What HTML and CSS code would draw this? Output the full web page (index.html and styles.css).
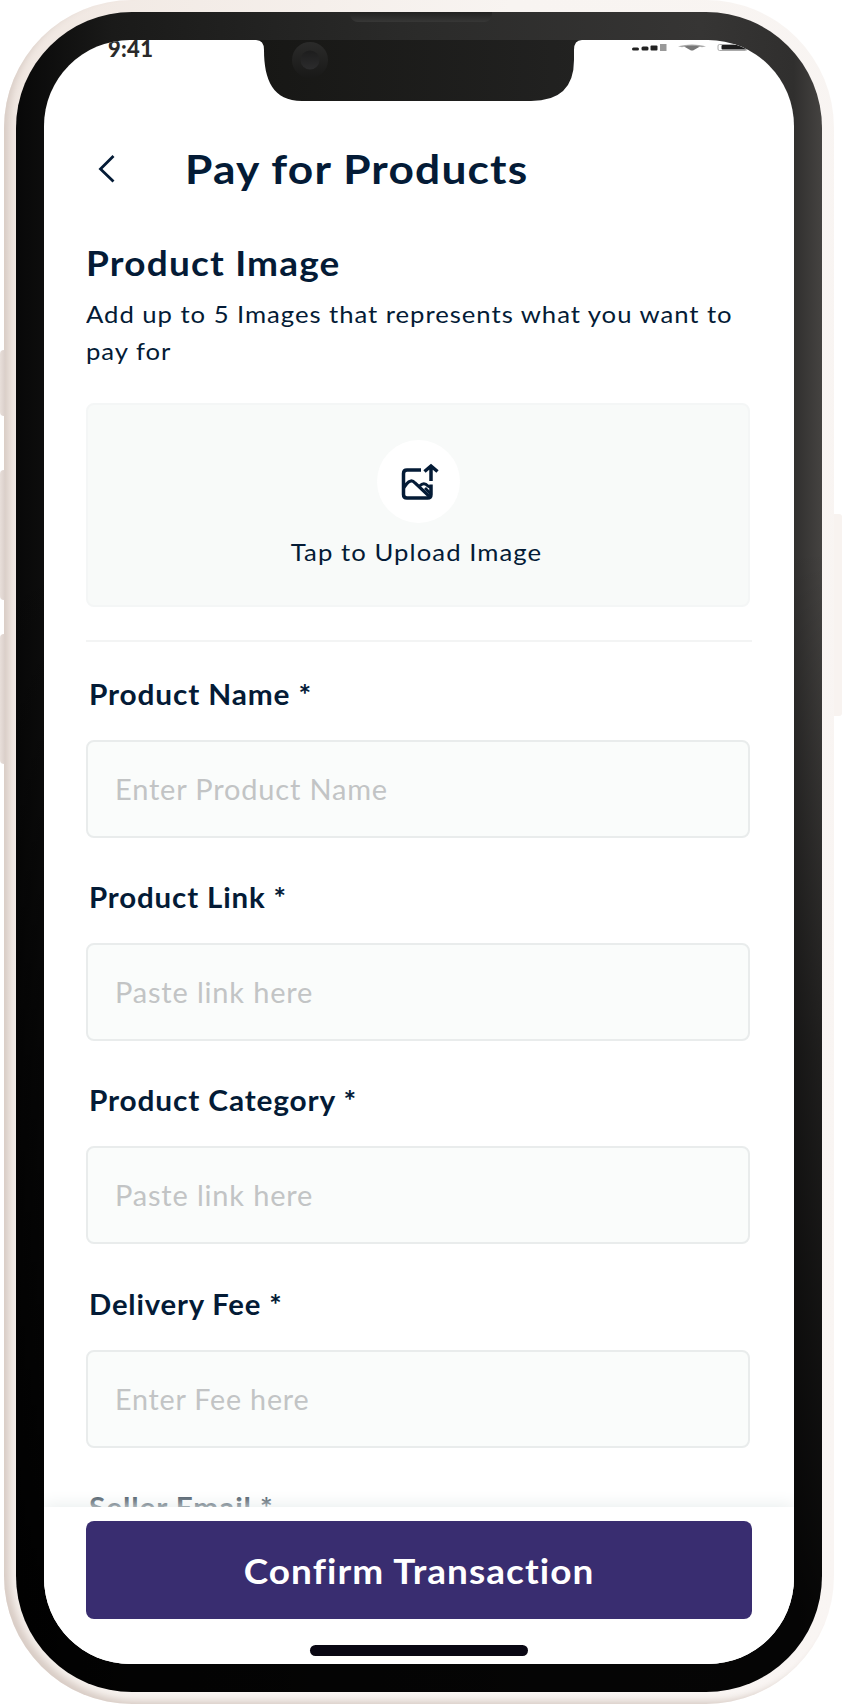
FILE: index.html
```html
<!DOCTYPE html>
<html lang="en">
<head>
<meta charset="utf-8">
<title>Pay for Products</title>
<link rel="stylesheet" href="styles.css">
</head>
<body>
<div class="phone">
  <span class="key key-mute"></span>
  <span class="key key-up"></span>
  <span class="key key-down"></span>
  <span class="key key-power"></span>
  <div class="frame">
    <div class="bezel">
      <span class="speaker"></span>
      <div class="screen">
        <div class="status">
          <span class="clock">9:41</span>
          <svg class="signals" width="116" height="8" viewBox="0 0 116 8">
            <g fill="#222"><rect x="0" y="3.5" width="7" height="3" rx="1.500"/><rect x="9.500" y="2.5" width="7" height="4" rx="1.500"/><rect x="18.500" y="1.500" width="7" height="5" rx="1"/></g>
            <rect x="28" y="0" width="6.500" height="7" fill="#999"/>
            <path d="M46 2.300Q60-1.500 74 2.300L70 3.200Q60 .5 50 3.200Z" fill="#aaa"/>
            <path d="M52 2.500Q60 .5 68 2.500L61 6.500H59Z" fill="#777"/>
            <rect x="86" y=".5" width="29" height="6" rx="1.500" fill="#fff" stroke="#aaa"/>
            <rect x="89.500" y="1" width="25" height="4.500" rx="1" fill="#1c1c1c"/>
          </svg>
        </div>
        <header class="header">
          <svg class="back" width="18" height="30" viewBox="0 0 18 30"><path d="M15.500 1 2.500 14l13 12.500" fill="none" stroke="#041b36" stroke-width="2.800"/></svg>
          <h1 class="title">Pay for Products</h1>
        </header>
        <main class="content">
          <h2 class="section-title">Product Image</h2>
          <p class="hint">Add up to 5 Images that represents what you want to<br>pay for</p>
          <div class="upload">
            <span class="upload-icon">
              <svg class="upload-glyph" width="38" height="38" viewBox="0 0 38 38" fill="none" stroke="#041b36" stroke-width="3.500">
                <path d="M22 7H8Q4.500 7 4.500 10.500V31.500Q4.500 35 8 35H28.500Q32 35 32 31.500V21.500"/>
                <path d="M4.500 25l3-4Q12 15.500 16 20L31 34" stroke-width="3.200"/>
                <path d="M20.500 23Q25 18.500 29 23l3 1.500M26 25l6 6" stroke-width="2.800"/>
                <path d="M32 18V3.500M25.500 8.500l6.500-5.500 6.500 5.500"/>
              </svg>
            </span>
            <span class="upload-text">Tap to Upload Image</span>
          </div>
          <hr class="rule">
          <div class="field"><label class="label">Product Name *</label><div class="input"><span class="placeholder">Enter Product Name</span></div></div>
          <div class="field"><label class="label label-link">Product Link *</label><div class="input"><span class="placeholder">Paste link here</span></div></div>
          <div class="field"><label class="label">Product Category *</label><div class="input"><span class="placeholder">Paste link here</span></div></div>
          <div class="field"><label class="label label-fee">Delivery Fee *</label><div class="input"><span class="placeholder placeholder-fee">Enter Fee here</span></div></div>
          <div class="field"><label class="label label-mail">Seller Email *</label></div>
        </main>
        <footer class="footer">
          <button class="confirm" type="button"><span class="confirm-text">Confirm Transaction</span></button>
          <span class="home"></span>
        </footer>
        <svg class="notch" width="326" height="62" viewBox="0 0 326 62">
          <defs>
            <linearGradient id="n" x1="0" x2="1" y1="0" y2="0"><stop stop-color="#171715"/><stop offset="1" stop-color="#222221"/></linearGradient>
            <linearGradient id="c" x1="0" x2="0" y1="0" y2="1"><stop stop-color="#2b2b2a"/><stop offset="1" stop-color="#191918"/></linearGradient>
            <linearGradient id="d" x1="0" x2="0" y1="0" y2="1"><stop stop-color="#1d1d1d"/><stop offset="1" stop-color="#2c2c2d"/></linearGradient>
          </defs>
          <path d="M0 0Q8 0 8 10C8 40 17 61 46 61H275Q318 61 318 20V10Q318 0 326 0Z" fill="url(#n)"/>
          <circle cx="54" cy="20" r="18" fill="url(#c)"/><circle cx="54" cy="20" r="9.500" fill="url(#d)"/>
        </svg>
      </div>
    </div>
  </div>
</div>
</body>
</html>
```

FILE: styles.css
```css
* { box-sizing: border-box; }
body { margin: 0; background: #fff; font-family: Lato, "Open Sans", sans-serif; color: #041b36; }
h1, h2, p { margin: 0; }

.phone { position: relative; width: 842px; height: 1704px; padding: 0 8px 0 4px; overflow: hidden; }
.frame {
  width: 830px; height: 1704px; padding: 12px 16px 12px 12px; border-radius: 128px;
  background: linear-gradient(100deg, #f0e7e1, #f8f4f1 45%, #f9f5f3);
  box-shadow: inset 7px -5px 7px -2px #d8ccc5;
}
.key { position: absolute; left: 0; width: 5px; border-radius: 4px 0 0 4px; background: linear-gradient(90deg, #e8dfda, #dacfca); }
.key-mute { top: 350px; height: 66px; }
.key-up { top: 470px; height: 130px; }
.key-down { top: 634px; height: 130px; }
.key-power { top: 514px; left: 834px; width: 8px; height: 202px; border-radius: 0 3px 3px 0; background: #f8f3f0; }

.bezel {
  position: relative; width: 806px; height: 1680px; padding: 28px; border-radius: 116px;
  background:
    linear-gradient(rgba(0, 0, 0, 0) 32%, rgba(0, 0, 0, .55) 62%, rgba(0, 0, 0, .9) 95%),
    linear-gradient(90deg, #080808, #1a1a19 12%, #2b2b2a 50%, #363534 85%, #302f2e 96.500%, #454341);
}
.speaker { position: absolute; top: 0; left: 334px; width: 142px; height: 10px; border-radius: 0 0 8px 8px; background: linear-gradient(#222221, #373736); }
.screen {
  position: relative; display: flex; flex-direction: column; width: 750px; height: 1624px;
  overflow: hidden; background: #fff; border-radius: 86px;
}
.notch { position: absolute; top: 0; left: 212px; }

.status { display: flex; justify-content: space-between; height: 80px; padding: 0 46px 0 64px; }
.clock { font-size: 22px; font-weight: 900; line-height: 18px; color: #2a2a2a; letter-spacing: .3px; }
.signals { margin-top: 4px; }

.header { display: flex; align-items: center; gap: 69px; height: 100px; padding: 0 54px; }
.title { margin-top: -2px; font-size: 41px; line-height: 60px; letter-spacing: 1.100px; white-space: nowrap; transform: scaleX(1.08); transform-origin: 0 50%; }

.content { flex: none; height: 1287px; padding: 20px 42px 0; overflow: hidden; }
.section-title { font-size: 34px; line-height: 46px; letter-spacing: 1.100px; transform: scaleX(1.088); transform-origin: 0 50%; }
.hint { margin-top: 9px; font-size: 24px; line-height: 37px; letter-spacing: .9px; white-space: nowrap; transform: scaleX(1.070); transform-origin: 0 50%; }
.upload {
  display: flex; flex-direction: column; align-items: center; width: 664px; height: 204px; margin-top: 34px; padding-top: 35px;
  background: #f8faf9; border: 2px solid #f4f6f6; border-radius: 8px;
}
.upload-icon { display: flex; align-items: center; justify-content: center; width: 83px; height: 83px; border-radius: 50%; background: #fff; }
.upload-glyph { overflow: visible; }
.upload-text { margin: 11px 4px 0 0; font-size: 24px; line-height: 36px; letter-spacing: 1px; transform: scaleX(1.070); }
.rule { height: 2px; width: 666px; margin: 33px 0 0; border: 0; background: #f3f4f4; }

.field { height: 203.200px; padding-top: 32px; }
.label { display: block; height: 66px; padding-left: 3px; font-size: 28px; font-weight: 700; line-height: 40px; letter-spacing: .8px; transform: scaleX(1.065); transform-origin: 3px 50%; }
.label-link { transform: scaleX(1.053); }
.label-fee { transform: scaleX(1.045); }
.input {
  width: 664px; height: 98px; padding-left: 27px; border: 2px solid #e9ecec; border-radius: 8px; background: #fafcfb;
  font-size: 28px; line-height: 94px; letter-spacing: .8px; color: #c2c4c5;
}
.placeholder { display: inline-block; transform: scaleX(1.035); transform-origin: 0 50%; }
.placeholder-fee { transform: scaleX(1.023); }
.label-mail { color: #43525f; }

.footer {
  position: relative; display: flex; flex-direction: column; align-items: center; flex: 1;
  padding-top: 14px; background: #fff; box-shadow: 0 -2px 16px #e9eeee;
}
.confirm {
  width: 666px; height: 98px; padding: 0; border: 0; border-radius: 8px; background: #392d70;
  color: #fff; font: 700 35px/98px Lato, sans-serif; letter-spacing: 1px;
}
.confirm-text { display: inline-block; transform: scaleX(1.056); }
.home { width: 218px; height: 11px; margin-top: 26px; border-radius: 6px; background: #090713; }
```
